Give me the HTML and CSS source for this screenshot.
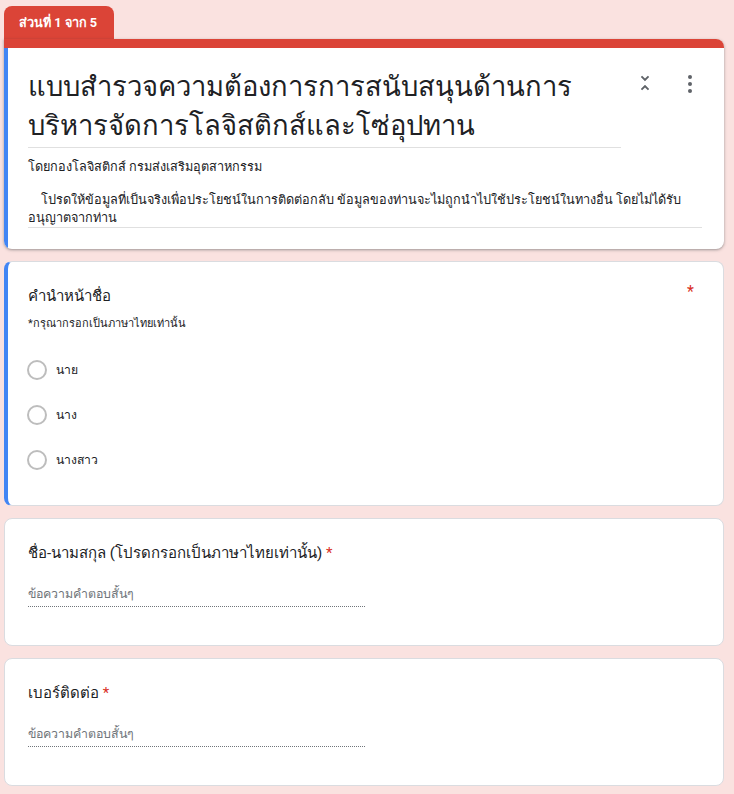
FILE: index.html
```html
<!DOCTYPE html>
<html lang="th">

<head>
    <meta charset="UTF-8" />
    <meta name="viewport" content="width=device-width, initial-scale=1.0" />
    <title>แบบสำรวจ</title>
    <link rel="stylesheet" href="styles.css">
</head>

<body>

    <div class="form">

        <!-- Section Tab -->
        <div class="section-tab">ส่วนที่ 1 จาก 5</div>

        <!-- Header Card -->
        <div class="header-card">
            <div class="band"></div>
            <div class="header-body">
                <div class="title-row">
                    <div class="form-title">แบบสำรวจความต้องการการสนับสนุนด้านการบริหารจัดการโลจิสติกส์และโซ่อุปทาน</div>
                    <div class="title-icons">
                        <svg class="icon" viewBox="0 0 24 24" width="22" height="22">
                            <path d="M7.41 18.59L8.83 20 12 16.83 15.17 20l1.41-1.41L12 14l-4.59 4.59zm9.18-13.18L15.17 4 12 7.17 8.83 4 7.41 5.41 12 10l4.59-4.59z" />
                        </svg>
                        <svg class="icon" viewBox="0 0 24 24" width="24" height="24">
                            <circle cx="12" cy="5" r="2" />
                            <circle cx="12" cy="12" r="2" />
                            <circle cx="12" cy="19" r="2" />
                        </svg>
                    </div>
                </div>
                <div class="form-sub">โดยกองโลจิสติกส์ กรมส่งเสริมอุตสาหกรรม</div>
                <div class="form-desc">&nbsp; &nbsp; โปรดให้ข้อมูลที่เป็นจริงเพื่อประโยชน์ในการติดต่อกลับ ข้อมูลของท่านจะไม่ถูกนำไปใช้ประโยชน์ในทางอื่น โดยไม่ได้รับอนุญาตจากท่าน</div>
            </div>
        </div>

        <!-- Question: Prefix -->
        <div class="card card-active">
            <div class="q-head">
                <span class="q-title">คำนำหน้าชื่อ</span>
                <span class="star">*</span>
            </div>
            <div class="q-help">*กรุณากรอกเป็นภาษาไทยเท่านั้น</div>
            <div class="radio-list">
                <label class="radio-row"><span class="radio"></span>นาย</label>
                <label class="radio-row"><span class="radio"></span>นาง</label>
                <label class="radio-row"><span class="radio"></span>นางสาว</label>
            </div>
        </div>

        <!-- Question: Name -->
        <div class="card">
            <div class="q-title">ชื่อ-นามสกุล (โปรดกรอกเป็นภาษาไทยเท่านั้น) <span class="star">*</span></div>
            <div class="short-answer">ข้อความคำตอบสั้นๆ</div>
        </div>

        <!-- Question: Phone -->
        <div class="card">
            <div class="q-title">เบอร์ติดต่อ <span class="star">*</span></div>
            <div class="short-answer">ข้อความคำตอบสั้นๆ</div>
        </div>

    </div>

</body>

</html>
```

FILE: styles.css
```css
/* === Base === */
* {
    margin: 0;
    padding: 0;
    box-sizing: border-box;
}

body {
    font-family: Roboto, sans-serif;
    background-color: #FAE2E0;
    color: #202124;
    padding: 6px 10px 0 4px;
}

.form {
    display: flex;
    flex-direction: column;
    gap: 12px;
}

/* === Section Tab + Header === */
.section-tab {
    align-self: flex-start;
    width: 110px;
    height: 33px;
    padding: 0 15px;
    background-color: #DB4437;
    color: #FFFFFF;
    font-size: 12.7px;
    font-weight: bold;
    line-height: 33px;
    border-radius: 8px 8px 0 0;
    margin-bottom: -12px;
    white-space: nowrap;
}

.header-card {
    background-color: #FFFFFF;
    border-radius: 0 8px 8px 8px;
    overflow: hidden;
    box-shadow: 0 1px 2px rgba(60, 64, 67, 0.3), 0 1px 3px 1px rgba(60, 64, 67, 0.15);
}

.band {
    height: 9px;
    background-color: #DB4437;
}

.header-body {
    border-left: 4px solid #4285F4;
    padding: 20px 22px 21px 20px;
}

.title-row {
    display: flex;
    align-items: flex-start;
}

.form-title {
    width: 594px;
    font-size: 27.4px;
    line-height: 39px;
    border-bottom: 1px solid #E0E0E0;
    padding-bottom: 1px;
}

.title-icons {
    display: flex;
    gap: 22px;
    margin: 4px 0 0 13px;
}

.icon {
    fill: #5F6368;
}

.form-sub {
    font-size: 12.7px;
    line-height: 20px;
    margin-top: 9px;
}

.form-desc {
    font-size: 12.7px;
    line-height: 18px;
    margin-top: 14px;
    border-bottom: 1px solid #E0E0E0;
}

/* === Question Cards === */
.card {
    background-color: #FFFFFF;
    border: 1px solid #DADCE0;
    border-radius: 8px;
    padding: 22px 24px 38px 23px;
}

.card-active {
    border-left: 4px solid #4285F4;
    padding: 22px 29px 23px 20px;
}

.q-head {
    display: flex;
    justify-content: space-between;
}

.q-title {
    font-size: 15px;
    line-height: 24px;
}

.star {
    color: #D93025;
}

.q-head .star {
    font-size: 16px;
    line-height: 16px;
}

.q-help {
    font-size: 11px;
    line-height: 16px;
    margin-top: 8px;
}

.radio-list {
    margin-top: 15px;
}

.radio-row {
    display: flex;
    align-items: center;
    gap: 9px;
    height: 45px;
    font-size: 12.2px;
}

.radio {
    width: 20px;
    height: 20px;
    border: 2px solid #BDBDBD;
    border-radius: 50%;
    margin-left: -1px;
}

.short-answer {
    width: 337px;
    margin-top: 19px;
    font-size: 12.4px;
    line-height: 20px;
    color: #70757A;
    padding-bottom: 2px;
    border-bottom: 1px dotted #70757A;
}
```
